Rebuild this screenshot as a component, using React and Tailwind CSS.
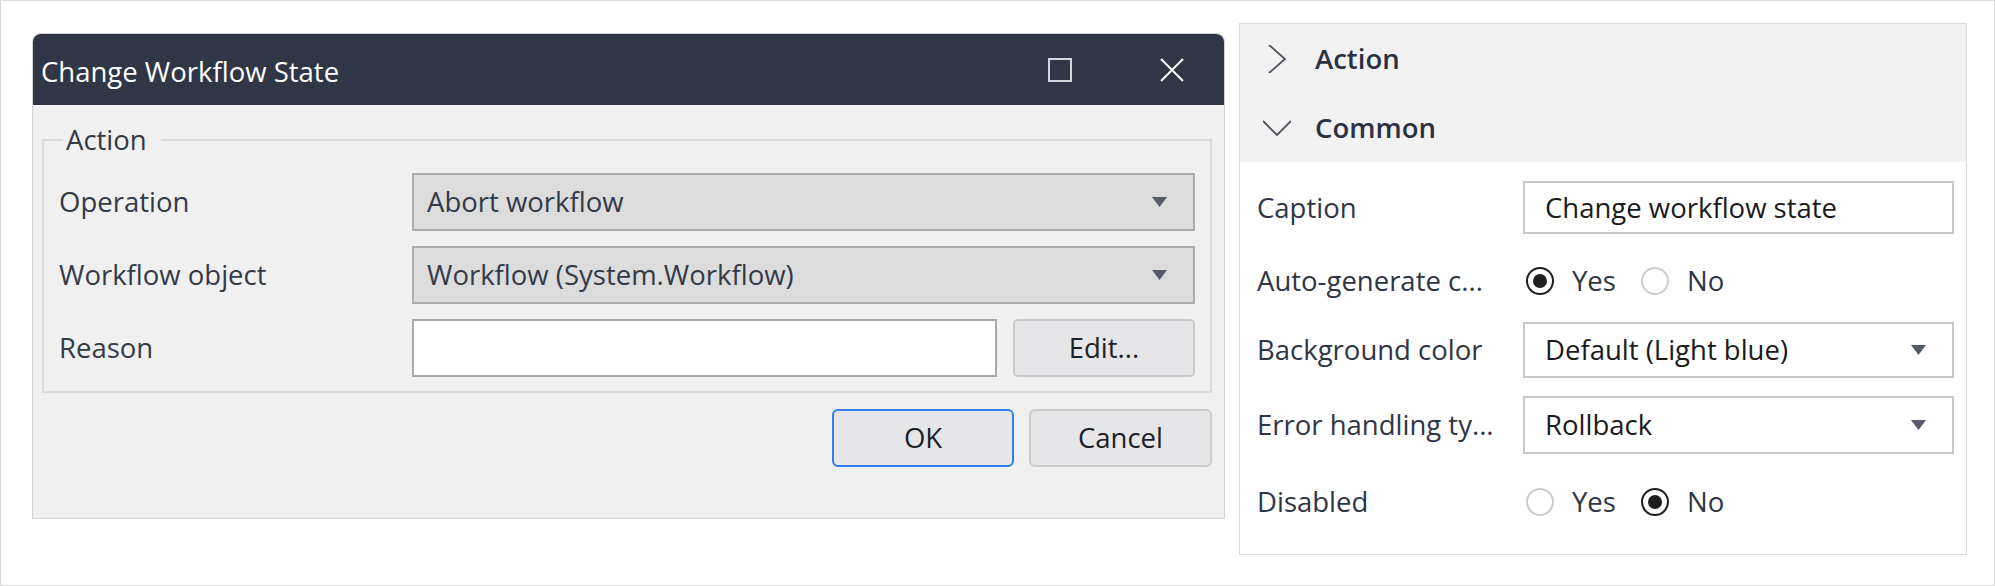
import React from 'react';

// small drop-down triangle used by the combo boxes
function Caret() {
  return (
    <svg width="15" height="10" viewBox="0 0 15 10" className="shrink-0">
      <polygon points="0,0 15,0 7.5,10" fill="#555b68" />
    </svg>
  );
}

function Radio({ checked }) {
  if (checked) {
    return (
      <div className="w-[28px] h-[28px] rounded-full border-2 border-[#1f1f1f] flex items-center justify-center shrink-0">
        <div className="w-[14px] h-[14px] rounded-full bg-[#1f1f1f]" />
      </div>
    );
  }
  return <div className="w-[28px] h-[28px] rounded-full border-2 border-[#cdcdd0] shrink-0" />;
}

function YesNo({ value }) {
  return (
    <div className="flex items-center">
      <div className="ml-[3px]">
        <Radio checked={value === 'yes'} />
      </div>
      <span className="ml-[18px]">Yes</span>
      <div className="ml-[25px]">
        <Radio checked={value === 'no'} />
      </div>
      <span className="ml-[18px]">No</span>
    </div>
  );
}

function ComboRow({ label, value }) {
  return (
    <div className="h-[58px] flex items-center">
      <span className="w-[353px] shrink-0">{label}</span>
      <div className="flex-1 h-full bg-[#dcdcdc] border-2 border-[#adadad] flex items-center pl-[13px] pr-[26px]">
        <span>{value}</span>
        <div className="ml-auto">
          <Caret />
        </div>
      </div>
    </div>
  );
}

function Dialog() {
  return (
    <div className="ml-[31px] mt-[32px] w-[1193px] h-[486px] flex flex-col border border-[#d3d3d3] rounded-t-[9px] bg-[#f0f0f0] overflow-hidden text-[#333a48]">
      {/* title bar */}
      <div className="h-[71px] shrink-0 bg-[#303646] flex items-center pl-[8px] pt-[4px]">
        <span className="text-white">Change Workflow State</span>
        <div className="ml-auto mr-[40px] flex items-center gap-[88px] -mt-[4px]">
          <svg width="24" height="24" viewBox="0 0 24 24">
            <rect x="1" y="1" width="22" height="22" fill="none" stroke="#d4d6dc" strokeWidth="2" />
          </svg>
          <svg width="24" height="24" viewBox="0 0 24 24">
            <path d="M1 1 L23 23 M23 1 L1 23" stroke="#ffffff" strokeWidth="2" />
          </svg>
        </div>
      </div>

      <div className="flex-1 pl-[9px] pr-[12px] pt-[17px]">
        <fieldset className="border-2 border-[#dcdcdc] px-[15px] pt-[15px] pb-[14px]">
          <legend className="ml-[4px] pl-[3px] pr-[14px] leading-[36px]">Action</legend>
          <div className="flex flex-col gap-[15px]">
            <ComboRow label="Operation" value="Abort workflow" />
            <ComboRow label="Workflow object" value="Workflow (System.Workflow)" />
            <div className="h-[58px] flex items-center">
              <span className="w-[353px] shrink-0">Reason</span>
              <div className="w-[585px] h-full bg-white border-2 border-[#a9a9a9]" />
              <button className="ml-[16px] flex-1 h-full bg-[#e6e6e8] border-2 border-[#cbcbce] rounded-[5px] text-[#1c2029]">
                Edit...
              </button>
            </div>
          </div>
        </fieldset>

        <div className="mt-[16px] flex justify-end gap-[15px] text-[#1c2029]">
          <button className="w-[182px] h-[58px] bg-[#e6e6e8] border-2 border-[#2f7ff0] rounded-[6px]">OK</button>
          <button className="w-[183px] h-[58px] bg-[#e6e6e8] border-2 border-[#cbcbce] rounded-[6px]">Cancel</button>
        </div>
      </div>
    </div>
  );
}

function SelectBox({ value }) {
  return (
    <div className="flex-1 h-full border-2 border-[#c8c8cc] bg-white flex items-center pl-[20px] pr-[26px] text-[#1a1a1a]">
      <span>{value}</span>
      <div className="ml-auto">
        <Caret />
      </div>
    </div>
  );
}

function PropertyPanel() {
  return (
    <div className="ml-[14px] mt-[22px] w-[728px] h-[532px] border border-[#dadada] bg-white flex flex-col text-[#2f3545]">
      <div className="bg-[#f2f2f2] text-[#2b3142] font-semibold">
        <div className="h-[69px] flex items-center pl-[23px]">
          <svg width="28" height="28" viewBox="0 0 28 28" className="shrink-0">
            <path d="M6 0 L22 14 L6 28" fill="none" stroke="#4d525e" strokeWidth="1.8" />
          </svg>
          <span className="ml-[24px]">Action</span>
        </div>
        <div className="h-[69px] flex items-center pl-[23px]">
          <svg width="28" height="28" viewBox="0 0 28 28" className="shrink-0">
            <path d="M0 7 L14 21 L28 7" fill="none" stroke="#4d525e" strokeWidth="1.8" />
          </svg>
          <span className="ml-[24px]">Common</span>
        </div>
      </div>

      <div className="pl-[17px] pr-[12px] flex flex-col">
        <div className="mt-[19px] h-[53px] flex items-center">
          <span className="w-[266px] shrink-0">Caption</span>
          <div className="flex-1 h-full border-2 border-[#c8c8cc] flex items-center pl-[20px] text-[#1a1a1a]">
            Change workflow state
          </div>
        </div>
        <div className="mt-[19px] h-[56px] flex items-center">
          <span className="w-[266px] shrink-0">Auto-generate c...</span>
          <YesNo value="yes" />
        </div>
        <div className="mt-[13px] h-[56px] flex items-center">
          <span className="w-[266px] shrink-0">Background color</span>
          <SelectBox value="Default (Light blue)" />
        </div>
        <div className="mt-[18px] h-[58px] flex items-center">
          <span className="w-[266px] shrink-0">Error handling ty...</span>
          <SelectBox value="Rollback" />
        </div>
        <div className="mt-[20px] h-[56px] flex items-center">
          <span className="w-[266px] shrink-0">Disabled</span>
          <YesNo value="no" />
        </div>
      </div>
    </div>
  );
}

export default function App() {
  return (
    <div className="w-[1995px] h-[586px] border border-[#d9d9d9] bg-white flex items-start font-['Open_Sans',sans-serif] text-[27.5px] leading-[36px] overflow-hidden">
      <Dialog />
      <PropertyPanel />
    </div>
  );
}
